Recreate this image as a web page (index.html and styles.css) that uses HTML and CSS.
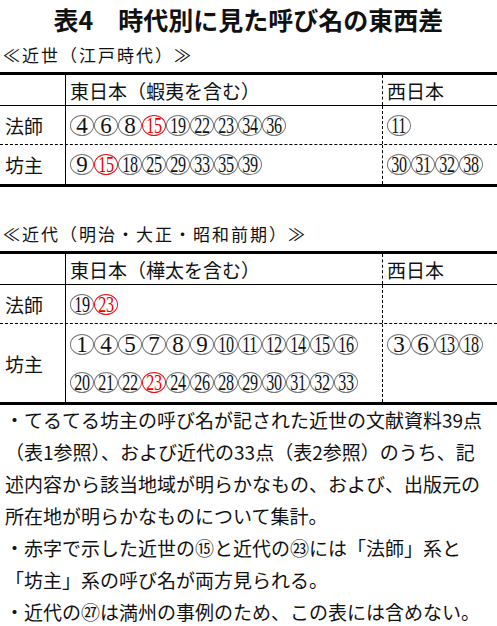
FILE: index.html
```html
<!DOCTYPE html>
<html lang="ja">
<head>
<meta charset="utf-8">
<title>表4 時代別に見た呼び名の東西差</title>
<link rel="stylesheet" href="styles.css">
</head>
<body>
<h1 class="title">表4　時代別に見た呼び名の東西差</h1>

<div class="label">≪近世（江戸時代）≫</div>
<div class="tbl">
  <div class="row head">
    <div class="c1"></div>
    <div class="c2">東日本（蝦夷を含む）</div>
    <div class="c3">西日本</div>
  </div>
  <div class="row body sep">
    <div class="c1">法師</div>
    <div class="c2"><div class="nums"><span class="n">4</span><span class="n">6</span><span class="n">8</span><span class="n w r"><span>15</span></span><span class="n w"><span>19</span></span><span class="n w"><span>22</span></span><span class="n w"><span>23</span></span><span class="n w"><span>34</span></span><span class="n w"><span>36</span></span></div></div>
    <div class="c3"><div class="nums"><span class="n w"><span>11</span></span></div></div>
  </div>
  <div class="row body">
    <div class="c1">坊主</div>
    <div class="c2"><div class="nums"><span class="n">9</span><span class="n w r"><span>15</span></span><span class="n w"><span>18</span></span><span class="n w"><span>25</span></span><span class="n w"><span>29</span></span><span class="n w"><span>33</span></span><span class="n w"><span>35</span></span><span class="n w"><span>39</span></span></div></div>
    <div class="c3"><div class="nums"><span class="n w"><span>30</span></span><span class="n w"><span>31</span></span><span class="n w"><span>32</span></span><span class="n w"><span>38</span></span></div></div>
  </div>
</div>

<div class="label second">≪近代（明治・大正・昭和前期）≫</div>
<div class="tbl">
  <div class="row head">
    <div class="c1"></div>
    <div class="c2">東日本（樺太を含む）</div>
    <div class="c3">西日本</div>
  </div>
  <div class="row body sep">
    <div class="c1">法師</div>
    <div class="c2"><div class="nums"><span class="n w"><span>19</span></span><span class="n w r"><span>23</span></span></div></div>
    <div class="c3"></div>
  </div>
  <div class="row body tall">
    <div class="c1">坊主</div>
    <div class="c2 stack">
      <div class="nums"><span class="n">1</span><span class="n">4</span><span class="n">5</span><span class="n">7</span><span class="n">8</span><span class="n">9</span><span class="n w"><span>10</span></span><span class="n w"><span>11</span></span><span class="n w"><span>12</span></span><span class="n w"><span>14</span></span><span class="n w"><span>15</span></span><span class="n w"><span>16</span></span></div>
      <div class="nums"><span class="n w"><span>20</span></span><span class="n w"><span>21</span></span><span class="n w"><span>22</span></span><span class="n w r"><span>23</span></span><span class="n w"><span>24</span></span><span class="n w"><span>26</span></span><span class="n w"><span>28</span></span><span class="n w"><span>29</span></span><span class="n w"><span>30</span></span><span class="n w"><span>31</span></span><span class="n w"><span>32</span></span><span class="n w"><span>33</span></span></div>
    </div>
    <div class="c3 top"><div class="nums"><span class="n">3</span><span class="n">6</span><span class="n w"><span>13</span></span><span class="n w"><span>18</span></span></div></div>
  </div>
</div>

<div class="notes">
  <p>・てるてる坊主の呼び名が記された近世の文献資料39点<br>（表1参照）、および近代の33点（表2参照）のうち、記<br>述内容から該当地域が明らかなもの、および、出版元の<br>所在地が明らかなものについて集計。</p>
  <p>・赤字で示した近世の⑮と近代の㉓には「法師」系と<br>「坊主」系の呼び名が両方見られる。</p>
  <p>・近代の㉗は満州の事例のため、この表には含めない。</p>
</div>
</body>
</html>
```

FILE: styles.css
```css
* {
  box-sizing: border-box;
}

html, body {
  margin: 0;
  padding: 0;
  background: #ffffff;
}

body {
  width: 497px;
  color: #111111;
  font-family: "Noto Sans CJK JP", sans-serif;
}

.title {
  margin: 0;
  height: 38px;
  line-height: 38px;
  font-size: 25px;
  font-weight: bold;
  text-align: center;
  white-space: nowrap;
}

.label {
  height: 34px;
  line-height: 34px;
  padding-left: 3px;
  font-size: 17px;
  letter-spacing: 2px;
  white-space: nowrap;
}

.label.second {
  margin-top: 30px;
}

.tbl {
  border-top: 3px solid #000000;
  border-bottom: 3px solid #000000;
  font-size: 19px;
}

.row {
  display: grid;
  grid-template-columns: 66px 317px 1fr;
}

.row.head {
  height: 31px;
  border-bottom: 1px solid #000000;
}

.row.body {
  height: 39px;
}

.row.sep {
  border-bottom: 1px dashed #000000;
}

.row.tall {
  height: 78px;
}

.c1, .c2, .c3 {
  display: flex;
  align-items: center;
  white-space: nowrap;
}

.c1 {
  padding-left: 5px;
  border-right: 1px solid #000000;
}

.c2 {
  padding-left: 4px;
  border-right: 1px dashed #000000;
}

.c3 {
  padding-left: 4px;
}

.c2.stack {
  flex-direction: column;
  align-items: flex-start;
  justify-content: flex-start;
  gap: 17px;
  padding-top: 10px;
}

.c3.top {
  align-items: flex-start;
  padding-top: 10px;
}

.nums {
  display: flex;
}

.n {
  display: inline-flex;
  align-items: center;
  justify-content: center;
  width: 24px;
  height: 21px;
  border: 1px solid #777777;
  border-radius: 50%;
  font-family: "Liberation Serif", "Times New Roman", serif;
  font-size: 23px;
  line-height: 19px;
  color: #111111;
}

.n.w span {
  display: inline-block;
  transform: scaleX(0.7);
  letter-spacing: -0.5px;
}

.n.r {
  border-color: #ee1111;
  color: #ee0000;
}

.notes {
  margin-top: -1px;
  padding-left: 5px;
  font-size: 19px;
  line-height: 32px;
  white-space: nowrap;
}

.notes p {
  margin: 0;
}
```
